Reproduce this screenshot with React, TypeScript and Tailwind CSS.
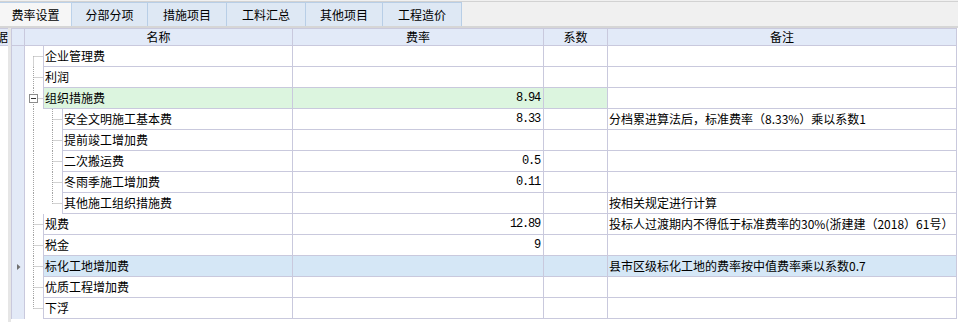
import React from 'react';

type Row = {
  name: string;
  level: 1 | 2;
  rate?: string;
  note?: string;
  expand?: boolean;
  tone?: 'green' | 'blue';
};

const TABS = [
  { label: '费率设置', w: 'w-[72px]', active: true },
  { label: '分部分项', w: 'w-[76px]' },
  { label: '措施项目', w: 'w-[79px]' },
  { label: '工料汇总', w: 'w-[79px]' },
  { label: '其他项目', w: 'w-[77px]' },
  { label: '工程造价', w: 'w-[79px]' },
];

const ROWS: Row[] = [
  { name: '企业管理费', level: 1 },
  { name: '利润', level: 1 },
  { name: '组织措施费', level: 1, rate: '8.94', expand: true, tone: 'green' },
  { name: '安全文明施工基本费', level: 2, rate: '8.33', note: '分档累进算法后，标准费率（8.33%）乘以系数1' },
  { name: '提前竣工增加费', level: 2 },
  { name: '二次搬运费', level: 2, rate: '0.5' },
  { name: '冬雨季施工增加费', level: 2, rate: '0.11' },
  { name: '其他施工组织措施费', level: 2, note: '按相关规定进行计算' },
  { name: '规费', level: 1, rate: '12.89', note: '投标人过渡期内不得低于标准费率的30%(浙建建（2018）61号）' },
  { name: '税金', level: 1, rate: '9' },
  { name: '标化工地增加费', level: 1, tone: 'blue', note: '县市区级标化工地的费率按中值费率乘以系数0.7' },
  { name: '优质工程增加费', level: 1 },
  { name: '下浮', level: 1 },
];

const LINE = '#a4a4a4';

// dotted connector lines of the tree column
const TreeLines: React.FC<{ index: number; row: Row }> = ({ index, row }) => {
  const last = ROWS.length - 1;
  const w = row.level === 1 ? 18 : 37;
  const v1Top = index === 0 ? 10.5 : 0;
  const v1Bottom = index === last ? 10.5 : 21;
  const firstChild = ROWS.findIndex((r) => r.level === 2);
  const lastChild = ROWS.map((r) => r.level).lastIndexOf(2);
  return (
    <svg width={w} height={21} className="shrink-0 block">
      <line x1={8.5} y1={v1Top} x2={8.5} y2={v1Bottom} stroke={LINE} strokeDasharray="1 1" />
      {row.level === 1 && <line x1={8.5} y1={10.5} x2={18} y2={10.5} stroke={LINE} strokeDasharray="1 1" />}
      {row.level === 2 && index >= firstChild && (
        <>
          <line x1={27.5} y1={0} x2={27.5} y2={index === lastChild ? 10.5 : 21} stroke={LINE} strokeDasharray="1 1" />
          <line x1={27.5} y1={10.5} x2={37} y2={10.5} stroke={LINE} strokeDasharray="1 1" />
        </>
      )}
      {row.expand && (
        <>
          <rect x={4.5} y={6.5} width={8} height={8} fill="#fff" stroke="#8c8c8c" />
          <line x1={6} y1={10.5} x2={11} y2={10.5} stroke="#333" />
        </>
      )}
    </svg>
  );
};

export default function App() {
  return (
    <div className="w-[958px] h-[322px] overflow-hidden bg-[#f0f0f0] flex flex-col text-[12px] text-black font-['Noto_Sans_CJK_SC',sans-serif] leading-none">
      {/* Tab strip */}
      <div className="mt-px h-[27px] border-t border-[#d2d2d2] border-b-2 border-b-[#d6d6d6] flex items-end">
        {TABS.map((t) => (
          <div
            key={t.label}
            className={`${t.w} h-[24px] flex items-center justify-center border-r border-t ${
              t.active
                ? 'bg-[#f6f6f6] border-[#bcd2ea]'
                : 'bg-[#dee8f4] border-[#b8cee6]'
            }`}
          >
            {t.label}
          </div>
        ))}
      </div>

      {/* Body */}
      <div className="flex-1 flex bg-white">
        {/* collapsed side panel */}
        <div className="w-[8px] overflow-hidden flex flex-col">
          <div className="h-[18px] bg-[#e2eaf8] border-y border-[#c9c9dd] flex items-center justify-end whitespace-nowrap">
            数据
          </div>
        </div>
        <div className="w-[3px] bg-[#e6e6e6]" />

        {/* Grid */}
        <div className="flex flex-col">
          {/* Header */}
          <div className="flex h-[18px] border-y border-[#c9c9dd] bg-[#e2eaf8]">
            <div className="w-[14px] border-x border-[#c9c9dd]" />
            <div className="w-[268px] border-r border-[#c9c9dd] flex items-center justify-center">名称</div>
            <div className="w-[251px] border-r border-[#c9c9dd] flex items-center justify-center">费率</div>
            <div className="w-[64px] border-r border-[#c9c9dd] flex items-center justify-center">系数</div>
            <div className="w-[349px] border-r border-[#c9c9dd] flex items-center justify-center">备注</div>
          </div>

          {ROWS.map((row, i) => {
            const bg = row.tone === 'green' ? 'bg-[#dcf5df]' : row.tone === 'blue' ? 'bg-[#d5e7f6]' : 'bg-white';
            const noteBg = row.tone === 'blue' ? 'bg-[#d5e7f6]' : 'bg-white';
            return (
              <div key={row.name} className="flex h-[21px]">
                <div className="w-[14px] border-x border-[#c9c9dd] bg-[#e3eaf7] flex items-center justify-center">
                  {row.tone === 'blue' && (
                    <svg width="4" height="6" className="block ml-px">
                      <path d="M0 0 L3.5 3 L0 6 Z" fill="#707070" />
                    </svg>
                  )}
                </div>
                <TreeLines index={i} row={row} />
                <div
                  className={`${row.level === 1 ? 'w-[250px]' : 'w-[231px]'} ${bg} border-x border-b border-[#c9c9dd] flex items-center pl-[1px]`}
                >
                  {row.name}
                </div>
                <div
                  className={`w-[251px] ${bg} border-r border-b border-[#c9c9dd] flex items-center justify-end pr-[3px] font-['Liberation_Mono',monospace] text-[12px] tracking-[-1.2px]`}
                >
                  {row.rate}
                </div>
                <div className={`w-[64px] ${bg} border-r border-b border-[#c9c9dd]`} />
                <div className={`w-[349px] ${noteBg} border-r border-b border-[#c9c9dd] flex items-center pl-[1px] whitespace-nowrap overflow-hidden`}>
                  {row.note}
                </div>
              </div>
            );
          })}
        </div>
      </div>
    </div>
  );
}
